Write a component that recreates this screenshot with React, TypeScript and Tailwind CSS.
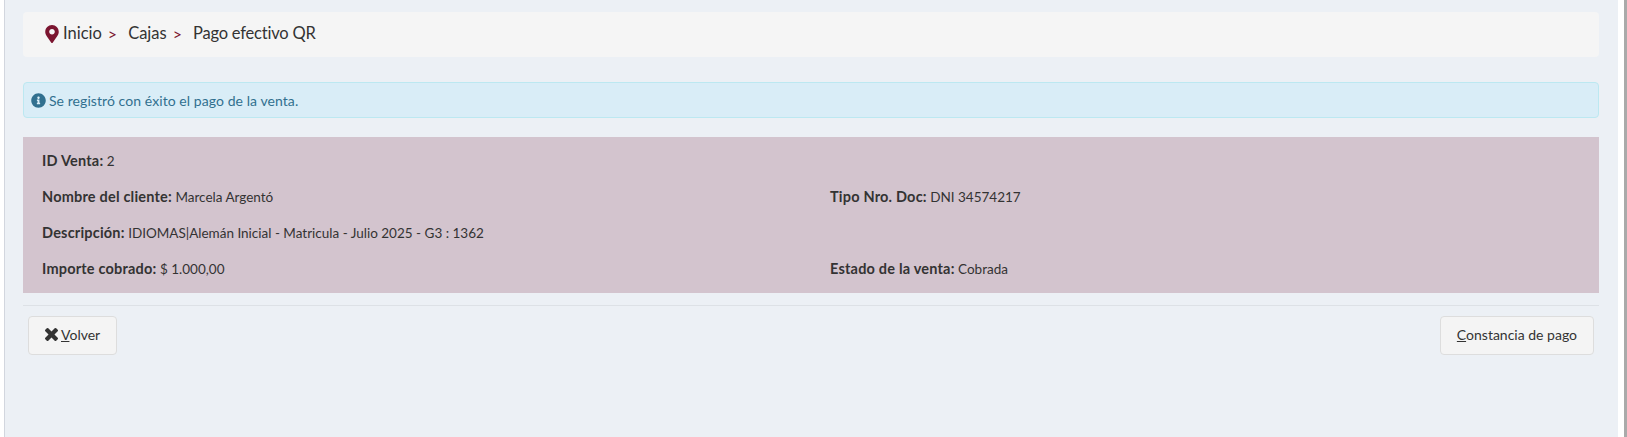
import { FaInfoCircle, FaMapMarkerAlt } from "react-icons/fa"

const Dato = ({ label, value }: { label: string; value: string }) => (
  <p className="h-[36.3px] leading-[36.3px] text-[13.5px]">
    <b className="font-bold text-[14.5px] tracking-[0.2px]">{label}</b> {value}
  </p>
)

const Sep = () => <span className="text-[#7b1530] text-[16px] ml-[6px] mr-[11px]">&gt;</span>

export default function App() {
  return (
    <div className="h-[437px] w-[1627px] flex overflow-hidden bg-white font-['Lato','Liberation_Sans',sans-serif] text-[14px] text-[#333]">
      <div className="w-[4px]" />
      <main className="w-[1614px] h-full bg-[#ecf0f5] border-l border-[#d2d6de] pl-[18px] pr-[19px] pt-[12px]">
        {/* Breadcrumb */}
        <div className="h-[45px] pb-[2px] rounded-[4px] bg-[#f5f5f5] flex items-center pl-[20px] text-[16.5px] text-[#333]">
          <FaMapMarkerAlt className="text-[#7b1530] text-[18px] mr-[2px]" />
          <span>Inicio</span>
          <Sep />
          <span>Cajas</span>
          <Sep />
          <span className="tracking-[-0.2px]">Pago efectivo QR</span>
        </div>

        {/* Alerta */}
        <div className="mt-[25px] h-[36px] rounded-[4px] border border-[#bce8f1] bg-[#d9edf7] text-[#31708f] flex items-center pl-[7px] gap-[3px]">
          <FaInfoCircle className="text-[15px]" />
          <span className="tracking-[0.07px]">Se registró con éxito el pago de la venta.</span>
        </div>

        {/* Datos */}
        <div className="mt-[19px] h-[156px] bg-[#d3c4ce] pl-[19px] pt-[5.5px] grid grid-cols-[788px_1fr] content-start">
          <div className="col-span-2"><Dato label="ID Venta:" value="2" /></div>
          <Dato label="Nombre del cliente:" value="Marcela Argentó" />
          <Dato label="Tipo Nro. Doc:" value="DNI 34574217" />
          <div className="col-span-2"><Dato label="Descripción:" value="IDIOMAS|Alemán Inicial - Matricula - Julio 2025 - G3 : 1362" /></div>
          <Dato label="Importe cobrado:" value="$ 1.000,00" />
          <Dato label="Estado de la venta:" value="Cobrada" />
        </div>

        <div className="mt-[12px] border-t border-[#dde1e6] pt-[10px] px-[5px] flex justify-between">
          <button className="h-[39px] pb-[2px] px-[16px] rounded-[4px] border border-[#ddd] bg-[#f4f4f4] flex items-center gap-[3px]">
            <svg viewBox="110 286 1188 1188" className="w-[13px] h-[13px] fill-[#333]">
              <path d="M1298 1242q0 40-28 68l-136 136q-28 28-68 28t-68-28l-294-294-294 294q-28 28-68 28t-68-28l-136-136q-28-28-28-68t28-68l294-294-294-294q-28-28-28-68t28-68l136-136q28-28 68-28t68 28l294 294 294-294q28-28 68-28t68 28l136 136q28 28 28 68t-28 68l-294 294 294 294q28 28 28 68z" />
            </svg>
            <span><u>V</u>olver</span>
          </button>
          <button className="h-[39px] pb-[2px] px-[16px] rounded-[4px] border border-[#ddd] bg-[#f4f4f4]">
            <u>C</u>onstancia de pago
          </button>
        </div>
      </main>
      <div className="w-[6px]" />
      <div className="w-[3px] bg-[#aaaaaa]" />
    </div>
  )
}
